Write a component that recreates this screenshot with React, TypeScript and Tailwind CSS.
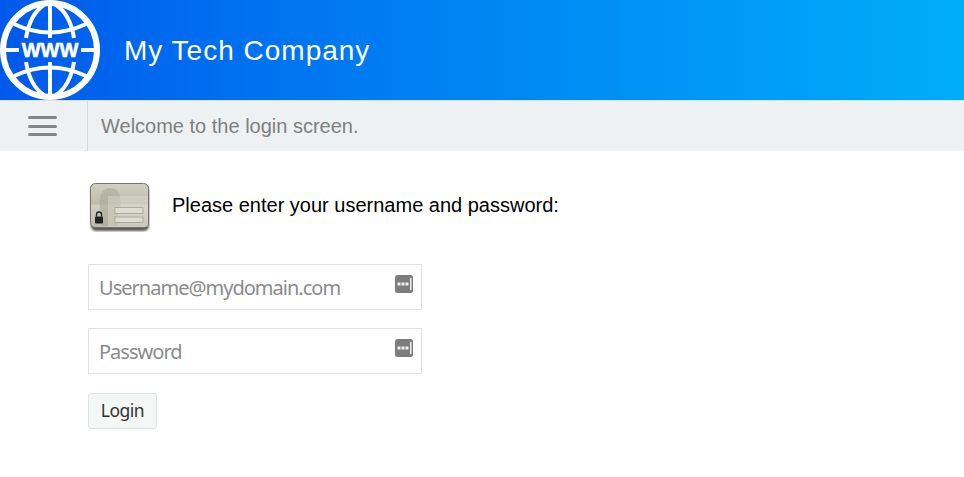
import React from "react";

function Globe() {
  return (
    <svg width="100" height="100" viewBox="0 0 100 100" className="shrink-0" fill="none" stroke="#fff">
      <circle cx="50" cy="50" r="47" strokeWidth="6" />
      <path d="M50 3V38M50 62V97" strokeWidth="4" />
      <path d="M3 50H19M81 50H97" strokeWidth="4" />
      <path d="M14 24Q50 41 86 24" strokeWidth="4" />
      <path d="M14 76Q50 59 86 76" strokeWidth="4" />
      <path d="M44 5Q30 14 26 38M56 5Q70 14 74 38M26 62Q30 86 44 95M74 62Q70 86 56 95" strokeWidth="4" />
      <text x="50" y="57" textAnchor="middle" fill="#fff" stroke="#fff" strokeWidth="0.6" fontSize="20" fontWeight="700" fontFamily="'Liberation Sans', sans-serif">WWW</text>
    </svg>
  );
}

function LoginIcon() {
  return (
    <svg width="62" height="50" viewBox="0 0 62 50" className="shrink-0">
      <defs>
        <linearGradient id="card" x1="0" y1="0" x2="0" y2="1">
          <stop offset="0" stopColor="#d2d0c2" />
          <stop offset="0.45" stopColor="#bdbbaa" />
          <stop offset="0.5" stopColor="#d0cebf" />
          <stop offset="1" stopColor="#bbb9a9" />
        </linearGradient>
        <filter id="soft" x="-10%" y="-10%" width="120%" height="120%">
          <feGaussianBlur stdDeviation="0.45" />
        </filter>
        <filter id="shadow" x="-10%" y="-10%" width="120%" height="120%">
          <feGaussianBlur stdDeviation="1" />
        </filter>
      </defs>
      <rect x="3" y="4" width="58" height="45" rx="5" fill="#222" opacity="0.75" filter="url(#shadow)" />
      <g filter="url(#soft)">
        <rect x="2.5" y="1.5" width="58" height="44" rx="5" fill="url(#card)" stroke="#77766c" strokeWidth="1" />
        <path d="M13 44V31Q11 26 12 16Q14 6 22 6Q30 6 32 14L33 27Q33 30 30 32V44Z" fill="#a8a695" opacity="0.55" />
        <path d="M20 45V14H60V45Z" fill="#e2e0d4" opacity="0.4" />
        <rect x="27" y="25.5" width="28" height="6" fill="#dedcd2" stroke="#9b998b" strokeWidth="0.7" />
        <rect x="27" y="35" width="28" height="5.5" fill="#dedcd2" stroke="#9b998b" strokeWidth="0.7" />
        <path d="M8.5 34.5V32.5a2.5 2.5 0 0 1 5 0V34.5" fill="none" stroke="#222" strokeWidth="1.3" />
        <rect x="7" y="34.5" width="8" height="7" rx="1" fill="#222" />
      </g>
    </svg>
  );
}

function FieldIcon() {
  return (
    <svg width="18" height="18" viewBox="0 0 18 18" className="absolute right-2 top-[10px]">
      <rect width="18" height="18" rx="2.5" fill="#7d7d7d" />
      <rect x="2.5" y="7.5" width="3" height="3" fill="#f2f2f2" />
      <rect x="6.5" y="7.5" width="3" height="3" fill="#f2f2f2" />
      <rect x="10.5" y="7.5" width="3" height="3" fill="#f2f2f2" />
      <rect x="15" y="3" width="1.5" height="12" fill="#f2f2f2" />
    </svg>
  );
}

function Field({ placeholder }: { placeholder: string }) {
  return (
    <div className="relative h-[46px] w-[334px] border border-[#dee2e2] bg-white">
      <div className="flex h-full items-center pl-[10px] pt-[1px] text-[20px] leading-none tracking-[-0.98px] text-[#8b8b8b] [font-family:'Noto_Sans',sans-serif]">
        {placeholder}
      </div>
      <FieldIcon />
    </div>
  );
}

export default function App() {
  return (
    <div className="h-[477px] w-[964px] overflow-hidden bg-white [font-family:'Liberation_Sans',sans-serif]">
      <header className="flex h-[100px] items-center bg-gradient-to-r from-[#0059ec] to-[#00adf9]">
        <Globe />
        <div className="ml-[24px] mt-[1px] text-[28px] tracking-[1px] text-white">My Tech Company</div>
      </header>
      <nav className="flex h-[51px] border-t border-[#dfe3e3] bg-[#eef1f1]">
        <div className="flex w-[88px] items-center justify-center border-r border-[#d5d9d9] pr-[2px]">
          <div className="flex w-[29px] flex-col gap-[5.5px]">
            <span className="h-[3px] rounded-sm bg-[#858585]" />
            <span className="h-[3px] rounded-sm bg-[#858585]" />
            <span className="h-[3px] rounded-sm bg-[#858585]" />
          </div>
        </div>
        <div className="flex items-center pl-[13px] text-[20px] text-[#808080]">Welcome to the login screen.</div>
      </nav>
      <main className="pl-[88px]">
        <div className="mt-[31px] flex h-[50px] items-center">
          <LoginIcon />
          <p className="ml-[22px] mb-[4px] text-[20px] text-black">Please enter your username and password:</p>
        </div>
        <div className="mt-[32px] flex flex-col gap-[18px]">
          <Field placeholder="Username@mydomain.com" />
          <Field placeholder="Password" />
        </div>
        <button className="mt-[19px] flex h-[36px] w-[69px] items-center justify-center rounded-[3px] border border-[#dee2e2] bg-[#f5f7f7] pb-[2px] text-[17.5px] tracking-[-0.5px] text-[#333] [font-family:'Noto_Sans',sans-serif]">
          Login
        </button>
      </main>
    </div>
  );
}
